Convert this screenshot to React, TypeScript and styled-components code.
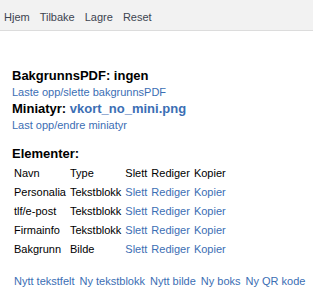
import React from "react";
import styled, { createGlobalStyle } from "styled-components";

type TElement = {
  name: string;
  type: string;
};

const elements: TElement[] = [
  { name: "Personalia", type: "Tekstblokk" },
  { name: "tlf/e-post", type: "Tekstblokk" },
  { name: "Firmainfo", type: "Tekstblokk" },
  { name: "Bakgrunn", type: "Bilde" },
];

const newItems = ["Nytt tekstfelt", "Ny tekstblokk", "Nytt bilde", "Ny boks", "Ny QR kode"];

export default function App() {
  return (
    <>
      <GlobalStyle />
      <TopBar>
        <NavLink href="#">Hjem</NavLink>
        <NavLink href="#">Tilbake</NavLink>
        <NavLink href="#">Lagre</NavLink>
        <NavLink href="#">Reset</NavLink>
      </TopBar>
      <Content>
        <Heading>BakgrunnsPDF: ingen</Heading>
        <SubLine $top={2}>
          <Link href="#">Laste opp/slette bakgrunnsPDF</Link>
        </SubLine>
        <Heading $top={1}>
          Miniatyr: <Link href="#">vkort_no_mini.png</Link>
        </Heading>
        <SubLine $top={2}>
          <Link href="#">Last opp/endre miniatyr</Link>
        </SubLine>
        <Heading $top={13}>Elementer:</Heading>
        <Table>
          <thead>
            <tr>
              <Cell>Navn</Cell>
              <Cell>Type</Cell>
              <Cell>Slett</Cell>
              <Cell>Rediger</Cell>
              <Cell>Kopier</Cell>
            </tr>
          </thead>
          <tbody>
            {elements.map((item) => (
              <tr key={item.name}>
                <Cell>{item.name}</Cell>
                <Cell>{item.type}</Cell>
                <Cell>
                  <Link href="#">Slett</Link>
                </Cell>
                <Cell>
                  <Link href="#">Rediger</Link>
                </Cell>
                <Cell>
                  <Link href="#">Kopier</Link>
                </Cell>
              </tr>
            ))}
          </tbody>
        </Table>
        <Footer>
          {newItems.map((label) => (
            <Link key={label} href="#">
              {label}
            </Link>
          ))}
        </Footer>
      </Content>
    </>
  );
}

const GlobalStyle = createGlobalStyle`
  body {
    margin: 0;
    background: #fff;
    font-family: "Liberation Sans", Arial, sans-serif;
    font-size: 11px;
    color: #000;
  }
`;

const TopBar = styled.div`
  display: flex;
  align-items: center;
  gap: 10px;
  height: 31px;
  box-sizing: border-box;
  padding: 4px 4px 0 4px;
  background: #f2f2f2;
  border-bottom: 1px solid #dcdcdc;
`;

const NavLink = styled.a`
  color: #3d4450;
  text-decoration: none;
  font-size: 11px;
  line-height: 13px;
`;

const Content = styled.div`
  padding: 37px 12px 0 12px;
`;

const Heading = styled.div<{ $top?: number }>`
  margin-top: ${(props) => props.$top ?? 0}px;
  font-size: 13px;
  font-weight: 700;
  line-height: 15px;
`;

const SubLine = styled.div<{ $top?: number }>`
  margin-top: ${(props) => props.$top ?? 0}px;
  font-size: 11px;
  line-height: 15px;
`;

const Link = styled.a`
  color: #3b6eb4;
  text-decoration: none;
`;

const Table = styled.table`
  margin-top: 3px;
  border-collapse: collapse;
  font-size: 11px;
  line-height: 13px;
`;

const Cell = styled.td`
  padding: 3px 2px;
  text-align: left;
  white-space: nowrap;
`;

const Footer = styled.div`
  display: flex;
  gap: 5px;
  margin-top: 16px;
  padding-left: 2px;
  font-size: 11px;
  line-height: 13px;
  white-space: nowrap;
`;
